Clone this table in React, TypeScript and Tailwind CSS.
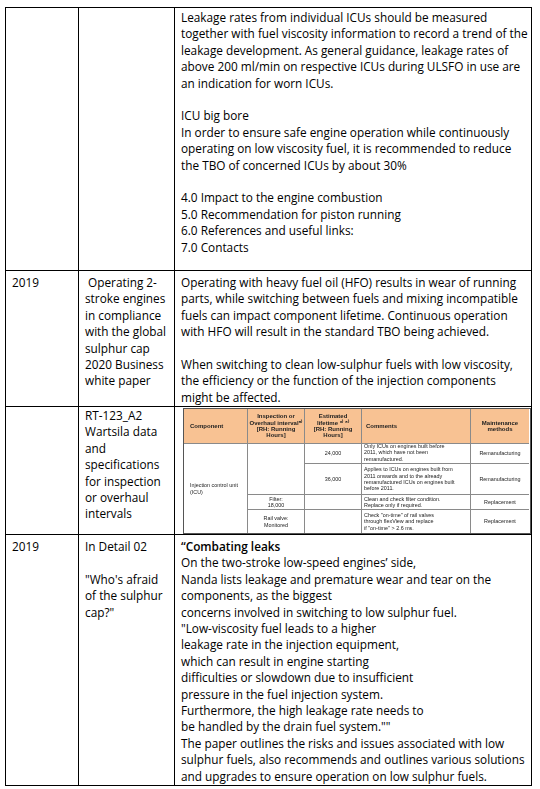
import React from "react";

const Lines = ({ lines }: { lines: string[] }) => (
    <>
        {lines.map((l, i) =>
            l === "" ? (
                <div key={i} className="h-[16.4px]" />
            ) : (
                <div key={i} className="whitespace-nowrap">
                    {l}
                </div>
            )
        )}
    </>
);

function SpecTable() {
    const cell = "border-r border-b border-[#8a8a8a] flex items-center";
    return (
        <div
            className="grid grid-cols-[64px_57px_57px_109px_58px] grid-rows-[35px_20px_31px_15px_23px] border border-[#555] text-[#222] leading-[6.4px] blur-[0.25px]"
            style={{ fontFamily: '"Liberation Sans", Arial, sans-serif', fontSize: "5.4px" }}
        >
            {/* header */}
            <div className={`${cell} bg-[#f8c293] font-bold text-[6px] pl-[6px]`}>Component</div>
            <div className={`${cell} bg-[#f8c293] font-bold text-[6px] justify-center text-center`}>
                Inspection or
                <br />
                Overhaul interval⁸⁾
                <br />
                [RH: Running
                <br />
                Hours]
            </div>
            <div className={`${cell} bg-[#f8c293] font-bold text-[6px] justify-center text-center`}>
                Estimated
                <br />
                lifetime ⁶⁾ ⁸⁾
                <br />
                [RH: Running
                <br />
                Hours]
            </div>
            <div className={`${cell} bg-[#f8c293] font-bold text-[6px] pl-[4px]`}>Comments</div>
            <div className={`${cell} bg-[#f8c293] font-bold text-[6px] justify-center text-center border-r-0`}>
                Maintenance
                <br />
                methods
            </div>

            {/* component spans all body rows */}
            <div className={`${cell} row-span-4 pl-[6px] bg-white border-b-0`}>
                Injection control unit
                <br />
                (ICU)
            </div>
            <div className={`${cell} row-span-2 bg-white`} />
            <div className={`${cell} justify-center bg-white`}>24,000</div>
            <div className={`${cell} bg-white pl-[2px] items-end overflow-hidden pb-[1px]`}>
                <div>
                    Only ICUs on engines built before
                    <br />
                    2011, which have not been
                    <br />
                    remanufactured.
                </div>
            </div>
            <div className={`${cell} justify-center bg-white border-r-0`}>Remanufacturing</div>

            <div className={`${cell} justify-center bg-white`}>36,000</div>
            <div className={`${cell} bg-white pl-[2px]`}>
                <div>
                    Applies to ICUs on engines built from
                    <br />
                    2011 onwards and to the already
                    <br />
                    remanufactured ICUs on engines built
                    <br />
                    before 2011.
                </div>
            </div>
            <div className={`${cell} justify-center bg-white border-r-0`}>Remanufacturing</div>

            <div className={`${cell} justify-center text-center bg-white`}>
                Filter:
                <br />
                18,000
            </div>
            <div className={`${cell} bg-white`} />
            <div className={`${cell} bg-white pl-[2px]`}>
                <div>
                    Clean and check filter condition.
                    <br />
                    Replace only if required.
                </div>
            </div>
            <div className={`${cell} justify-center bg-white border-r-0`}>Replacement</div>

            <div className={`${cell} justify-center text-center bg-white border-b-0`}>
                Rail valve:
                <br />
                Monitored
            </div>
            <div className={`${cell} bg-white border-b-0`} />
            <div className={`${cell} bg-white pl-[2px] border-b-0`}>
                <div>
                    Check "on-time" of rail valves
                    <br />
                    through flexView and replace
                    <br />
                    if "on-time" &gt; 2.6 ms.
                </div>
            </div>
            <div className={`${cell} justify-center bg-white border-r-0 border-b-0`}>Replacement</div>
        </div>
    );
}

export default function App() {
    const td = "border border-black align-top pl-[6px]";
    return (
        <div
            className="w-[540px] h-[789px] bg-white pl-[5px] pt-[7px] text-black text-[11.8px] leading-[16.4px]"
            style={{ fontFamily: '"Open Sans", "Noto Sans", sans-serif' }}
        >
            <table className="border-collapse table-fixed w-[526px]">
                <colgroup>
                    <col className="w-[73px]" />
                    <col className="w-[96px]" />
                    <col className="w-[357px]" />
                </colgroup>
                <tbody>
                    {/* continued row */}
                    <tr className="h-[263px]">
                        <td className={td} />
                        <td className={td} />
                        <td className={`${td} pt-[1px]`}>
                            <Lines
                                lines={[
                                    "Leakage rates from individual ICUs should be measured",
                                    "together with fuel viscosity information to record a trend of the",
                                    "leakage development. As general guidance, leakage rates of",
                                    "above 200 ml/min on respective ICUs during ULSFO in use are",
                                    "an indication for worn ICUs.",
                                    "",
                                    "ICU big bore",
                                    "In order to ensure safe engine operation while continuously",
                                    "operating on low viscosity fuel, it is recommended to reduce",
                                    "the TBO of concerned ICUs by about 30%",
                                    "",
                                    "4.0 Impact to the engine combustion",
                                    "5.0 Recommendation for piston running",
                                    "6.0 References and useful links:",
                                    "7.0 Contacts",
                                ]}
                            />
                        </td>
                    </tr>

                    <tr className="h-[136px]">
                        <td className={`${td} pt-[3px]`}>2019</td>
                        <td className={`${td} pt-[3px]`}>
                            <Lines
                                lines={[
                                    "\u00a0Operating 2-",
                                    "stroke engines",
                                    "in compliance",
                                    "with the global",
                                    "sulphur cap",
                                    "2020 Business",
                                    "white paper",
                                ]}
                            />
                        </td>
                        <td className={`${td} pt-[3px]`}>
                            <Lines
                                lines={[
                                    "Operating with heavy fuel oil (HFO) results in wear of running",
                                    "parts, while switching between fuels and mixing incompatible",
                                    "fuels can impact component lifetime. Continuous operation",
                                    "with HFO will result in the standard TBO being achieved.",
                                    "",
                                    "When switching to clean low-sulphur fuels with low viscosity,",
                                    "the efficiency or the function of the injection components",
                                    "might be affected.",
                                ]}
                            />
                        </td>
                    </tr>

                    <tr className="h-[127px]">
                        <td className={td} />
                        <td className={`${td} pt-[0px]`}>
                            <Lines
                                lines={[
                                    "RT-123_A2",
                                    "Wartsila data",
                                    "and",
                                    "specifications",
                                    "for inspection",
                                    "or overhaul",
                                    "intervals",
                                ]}
                            />
                        </td>
                        <td className="border border-black align-top pl-[8px] pt-[1px]">
                            <SpecTable />
                        </td>
                    </tr>

                    <tr className="h-[251px]">
                        <td className={`${td} pt-[3px]`}>2019</td>
                        <td className={`${td} pt-[3px]`}>
                            <Lines
                                lines={["In Detail 02", "", "\"Who's afraid", "of the sulphur", "cap?\""]}
                            />
                        </td>
                        <td className={`${td} pt-[3px]`}>
                            <div className="font-semibold">“Combating leaks</div>
                            <Lines
                                lines={[
                                    "On the two-stroke low-speed engines’ side,",
                                    "Nanda lists leakage and premature wear and tear on the",
                                    "components, as the biggest",
                                    "concerns involved in switching to low sulphur fuel.",
                                    "\"Low-viscosity fuel leads to a higher",
                                    "leakage rate in the injection equipment,",
                                    "which can result in engine starting",
                                    "difficulties or slowdown due to insufficient",
                                    "pressure in the fuel injection system.",
                                    "Furthermore, the high leakage rate needs to",
                                    "be handled by the drain fuel system.\"\"",
                                    "The paper outlines the risks and issues associated with low",
                                    "sulphur fuels, also recommends and outlines various solutions",
                                    "and upgrades to ensure operation on low sulphur fuels.",
                                ]}
                            />
                        </td>
                    </tr>
                </tbody>
            </table>
        </div>
    );
}
